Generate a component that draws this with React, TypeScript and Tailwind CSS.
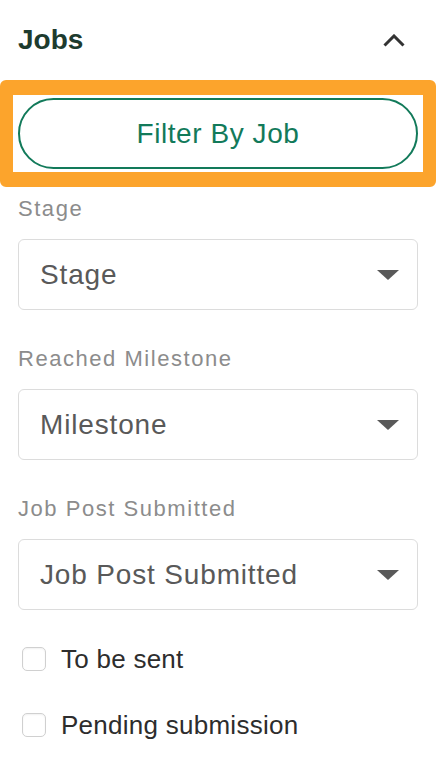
import React from "react";

const selects = [
	{ label: "Stage", value: "Stage" },
	{ label: "Reached Milestone", value: "Milestone" },
	{ label: "Job Post Submitted", value: "Job Post Submitted" }
];

const checks = ["To be sent", "Pending submission"];

const Caret = () => (
	<svg width="22" height="10" viewBox="0 0 22 10" className="shrink-0">
		<path d="M0 0 L22 0 L11 10 Z" fill="#595959" />
	</svg>
);

const SelectField = ({ label, value }: { label: string; value: string }) => (
	<div className="flex flex-col">
		<span className="text-[22px] leading-[24px] tracking-[0.07em] text-[#8c8c8c]">
			{label}
		</span>
		<div className="mt-[18px] h-[71px] rounded-[6px] border-[1.5px] border-[#dcdcdc] flex items-center justify-between pl-[21px] pr-[18px]">
			<span className="text-[28px] tracking-[0.03em] text-[#595959]">
				{value}
			</span>
			<Caret />
		</div>
	</div>
);

export default function App() {
	return (
		<div
			className="w-[436px] h-[780px] bg-white overflow-hidden"
			style={{ fontFamily: '"Liberation Sans", Arial, sans-serif' }}>
			{/* Header */}
			<div className="h-[80px] flex items-center justify-between pl-[18px] pr-[31px]">
				<span className="text-[28px] font-bold text-[#1d3b2e]">Jobs</span>
				<svg width="22" height="13" viewBox="0 0 22 13" fill="none">
					<path
						d="M1.5 11.5 L11 2 L20.5 11.5"
						stroke="#333"
						strokeWidth="3"
					/>
				</svg>
			</div>

			{/* Highlighted button */}
			<div className="border-x-[13px] border-y-[15px] border-[#fca42c] rounded-[6px] px-[5px] py-[3px]">
				<button className="w-full h-[71px] rounded-full border-2 border-[#127a5a] text-[#127a5a] text-[28px] tracking-[0.02em]">
					Filter By Job
				</button>
			</div>

			<div className="px-[18px] pt-[10px] flex flex-col gap-[37px]">
				{selects.map((s) => (
					<SelectField key={s.label} label={s.label} value={s.value} />
				))}
				<div className="flex flex-col gap-[42px] pl-[4px]">
					{checks.map((c) => (
						<label key={c} className="flex items-center gap-[15px] h-[24px]">
							<span className="w-[24px] h-[24px] rounded-[5px] border border-[#d0d0d0] shadow-[inset_0_1px_2px_rgba(0,0,0,0.06)]" />
							<span className="text-[26px] tracking-[0.01em] text-[#2d2d2d]">{c}</span>
						</label>
					))}
				</div>
			</div>
		</div>
	);
}
